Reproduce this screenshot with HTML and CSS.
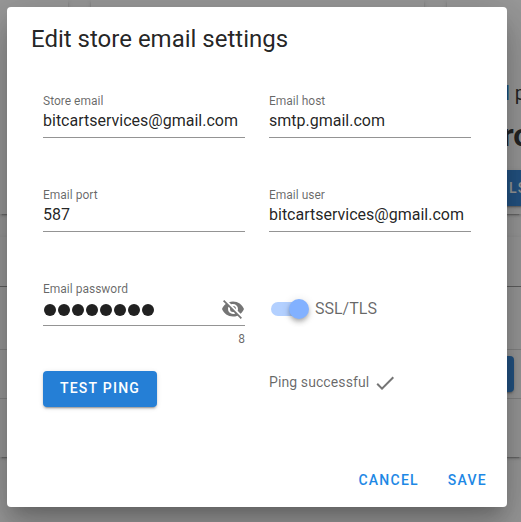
FILE: index.html
```html
<!DOCTYPE html>
<html lang="en">
<head>
<meta charset="utf-8">
<title>Edit store email settings</title>
<link rel="stylesheet" href="styles.css">
</head>
<body>
<div class="page">
  <div class="cards">
    <div class="card"></div>
    <div class="card"></div>
    <div class="card card-info">
      <div class="info-top">p</div>
      <div class="info-line"><span class="link">l</span> p</div>
      <div class="info-value">ro</div>
      <div class="fill info-button">LS</div>
    </div>
  </div>
  <div class="panel">
    <div class="row row-head"></div>
    <div class="row row-tools"></div>
    <div class="row row-action"><div class="fill action-button"></div></div>
    <div class="row row-last"></div>
  </div>
</div>
<div class="overlay"></div>
<div class="dialog">
  <h1 class="title">Edit store email settings</h1>
  <div class="form">
    <div class="field"><div class="label">Store email</div><div class="value">bitcartservices@gmail.com</div></div>
    <div class="field"><div class="label">Email host</div><div class="value">smtp.gmail.com</div></div>
    <div class="field"><div class="label">Email port</div><div class="value">587</div></div>
    <div class="field"><div class="label">Email user</div><div class="value">bitcartservices@gmail.com</div></div>
    <div class="field">
      <div class="label">Email password</div>
      <div class="value password">
        <div class="dots"><i></i><i></i><i></i><i></i><i></i><i></i><i></i><i></i></div>
        <svg class="eye" viewBox="0 0 24 24"><path d="M11.83,9L15,12.16C15,12.11 15,12.05 15,12A3,3 0 0,0 12,9C11.94,9 11.89,9 11.83,9M7.53,9.8L9.08,11.35C9.03,11.56 9,11.77 9,12A3,3 0 0,0 12,15C12.22,15 12.44,14.97 12.65,14.92L14.2,16.47C13.53,16.8 12.79,17 12,17A5,5 0 0,1 7,12C7,11.21 7.2,10.47 7.53,9.8M2,4.27L4.28,6.55L4.73,7C3.08,8.3 1.78,10 1,12C2.73,16.39 7,19.5 12,19.5C13.55,19.5 15.03,19.2 16.38,18.66L16.81,19.08L19.73,22L21,20.73L3.27,3M12,7A5,5 0 0,1 17,12C17,12.64 16.87,13.26 16.64,13.82L19.57,16.75C21.07,15.5 22.27,13.86 23,12C21.27,7.61 17,4.5 12,4.5C10.6,4.5 9.26,4.75 8,5.2L10.17,7.35C10.74,7.13 11.35,7 12,7Z"/></svg>
      </div>
      <div class="counter">8</div>
    </div>
    <div class="switch"><div class="track"><div class="thumb"></div></div><span class="switch-label">SSL/TLS</span></div>
    <div class="fill ping-button">TEST PING</div>
    <div class="status">Ping successful <svg class="check" viewBox="0 0 24 24"><path d="M21,7L9,19L3.5,13.5L4.91,12.09L9,16.17L19.59,5.59L21,7Z"/></svg></div>
  </div>
  <div class="actions"><span class="text-button">CANCEL</span><span class="text-button">SAVE</span></div>
</div>
</body>
</html>
```
FILE: styles.css
```css
* { box-sizing: border-box; }
html, body { height: 100%; }
body { margin: 0; overflow: hidden; background: #fff; font-family: Roboto, "Liberation Sans", sans-serif; color: rgba(0,0,0,.87); }
.page { height: 522px; overflow: hidden; }
.cards { display: grid; grid-template-columns: 68px 333px 74px; gap: 23px; height: 214px; }
.card, .panel { box-shadow: 0 3px 1px -2px rgba(0,0,0,.2), 0 2px 2px rgba(0,0,0,.14), 0 1px 5px rgba(0,0,0,.12); }
.card-info { overflow: hidden; white-space: nowrap; padding-left: 59px; }
.info-top { height: 100px; margin-top: -23px; padding-left: 8px; font-size: 20px; line-height: 24px; }
.info-line { height: 36px; font-size: 20px; line-height: 32px; margin-left: -1px; }
.link { color: #1976d2; }
.info-value { height: 57px; font-size: 32px; font-weight: 700; line-height: 44px; margin-left: -4px; }
.fill { display: flex; align-items: center; justify-content: center; height: 36px; padding-bottom: 2px; border-radius: 4px; background: #257fd6; color: #fff; font-size: 14px; font-weight: 500; letter-spacing: 1.25px; box-shadow: 0 3px 1px -2px rgba(0,0,0,.2), 0 2px 2px rgba(0,0,0,.14), 0 1px 5px rgba(0,0,0,.12); }
.info-button { width: 40px; margin-left: -9px; justify-content: flex-start; padding-left: 12px; padding-bottom: 0; border-radius: 0; }
.panel { margin-top: 23px; height: 220px; }
.row { border-bottom: 1px solid rgba(0,0,0,.15); }
.row-head { height: 50px; border-color: rgba(0,0,0,.42); }
.row-tools { height: 63px; }
.row-action { height: 49px; padding-top: 6px; }
.action-button { width: 64px; margin-left: 450px; }
.row-last { height: 58px; border: 0; }
.overlay { position: absolute; inset: 0; background: rgba(33,33,33,.46); }
.dialog { position: absolute; left: 7px; top: 7px; width: 500px; height: 500px; padding: 16px 20px 9px 24px; display: flex; flex-direction: column; border-radius: 4px; background: #fff; box-shadow: 0 11px 15px -7px rgba(0,0,0,.2), 0 24px 38px 3px rgba(0,0,0,.14), 0 9px 46px 8px rgba(0,0,0,.12); }
.title { margin: 0; font-size: 24px; font-weight: 400; line-height: 32px; }
.form { display: grid; grid-template-columns: 202px 202px; grid-template-rows: 94px 94px 94px 36px; column-gap: 24px; padding: 36px 12px 0; }
.label { padding-top: 2px; height: 14px; font-size: 12px; line-height: 16px; color: rgba(0,0,0,.6); white-space: nowrap; }
.value { height: 33px; padding-top: 6px; line-height: 20px; font-size: 16px; border-bottom: 1px solid rgba(0,0,0,.42); }
.password { display: flex; justify-content: space-between; padding-top: 0; }
.dots { display: flex; gap: 1.6px; padding: 10.6px 0 0 .7px; }
.dots i { width: 12.4px; height: 12.4px; border-radius: 50%; background: #212121; }
.eye { width: 24px; height: 24px; margin-top: 4px; fill: #757575; }
.counter { margin-top: 7px; text-align: right; font-size: 12px; line-height: 12px; color: rgba(0,0,0,.6); }
.switch { display: flex; align-items: center; gap: 8px; height: 24px; margin: 18px 0 0 2px; color: rgba(0,0,0,.6); font-size: 16px; }
.switch-label { padding-bottom: 2px; }
.track { display: flex; justify-content: flex-end; align-items: center; width: 36px; height: 14px; border-radius: 7px; background: #b3d0ff; }
.thumb { width: 20px; height: 20px; margin-right: -2px; border-radius: 50%; background: #82b1ff; box-shadow: 0 2px 4px -1px rgba(0,0,0,.2), 0 4px 5px rgba(0,0,0,.14), 0 1px 10px rgba(0,0,0,.12); }
.ping-button { width: 114px; margin-top: -2px; }
.status { display: flex; align-items: center; gap: 4px; height: 24px; margin-top: -3px; font-size: 14px; letter-spacing: .1px; color: rgba(0,0,0,.6); }
.check { width: 24px; height: 24px; margin-top: 1px; fill: #757575; }
.actions { display: flex; justify-content: flex-end; gap: 29px; margin-top: auto; }
.text-button { line-height: 36px; font-size: 14px; font-weight: 500; letter-spacing: 1.25px; color: #1e88e5; }
```
